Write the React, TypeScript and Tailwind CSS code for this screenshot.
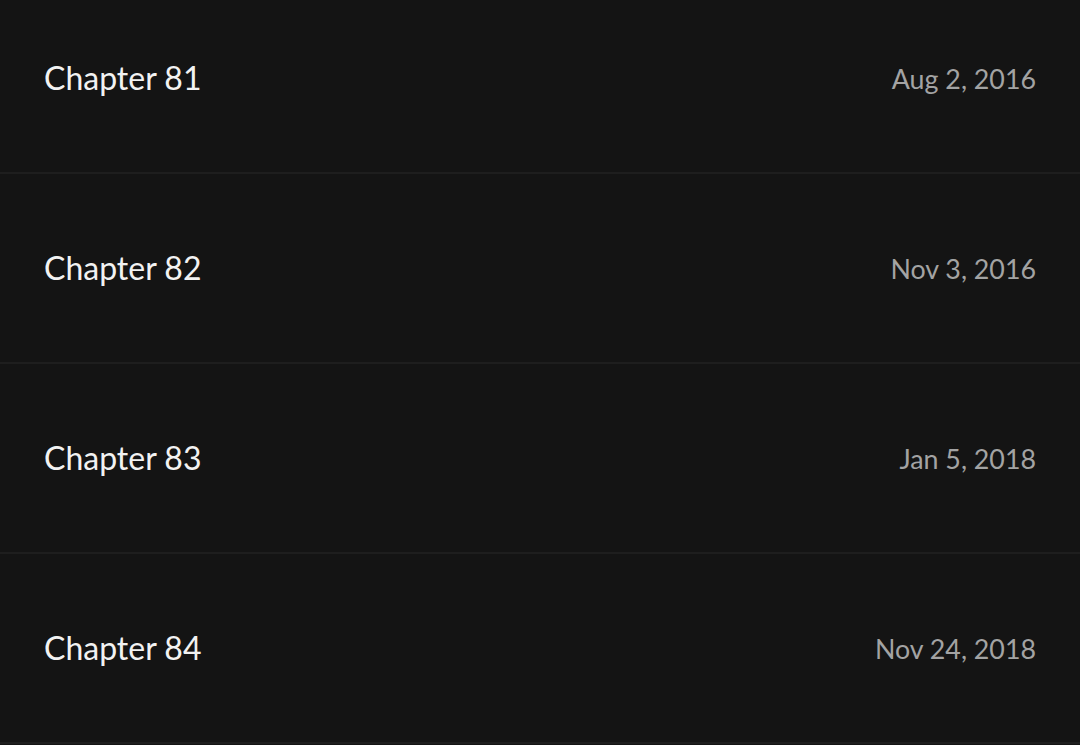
import React from "react";

const rows = [
  { t: "Chapter 81", d: "Aug 2, 2016" },
  { t: "Chapter 82", d: "Nov 3, 2016" },
  { t: "Chapter 83", d: "Jan 5, 2018" },
  { t: "Chapter 84", d: "Nov 24, 2018" },
];

export default function App() {
  return (
    <div className="w-[1080px] h-[745px] overflow-hidden bg-[#141414]" style={{ fontFamily: "Lato, 'Noto Sans', sans-serif" }}>
      <div className="-mt-[16px]">
        {rows.map((r, i) => (
          <div key={i} className="h-[190px] flex items-center justify-between pl-[44px] pr-[44px] border-b-2 border-[#1e1e1e]">
            <span className="text-[32px] text-[#f2f2f2]">{r.t}</span>
            <span className="text-[26.8px] text-[#a3a3a3] pt-[3px]">{r.d}</span>
          </div>
        ))}
      </div>
    </div>
  );
}
